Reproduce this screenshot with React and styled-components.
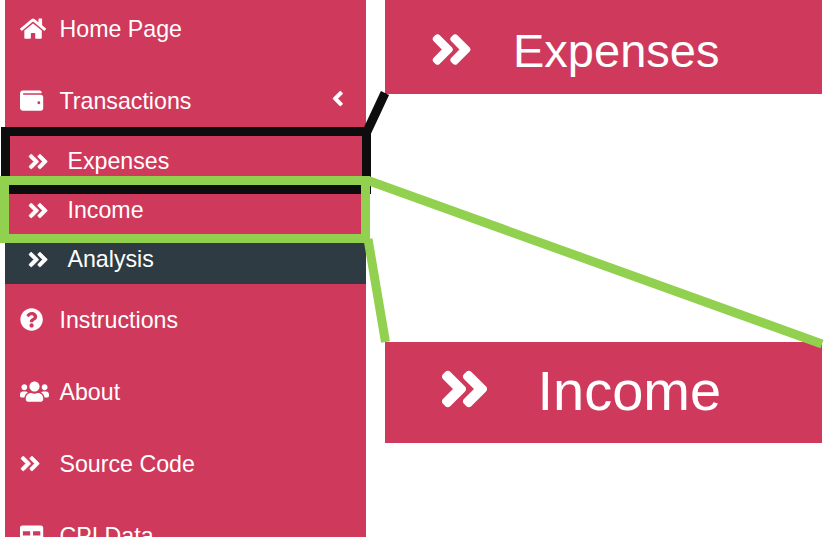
import React from 'react';
import styled, { createGlobalStyle } from 'styled-components';
import {
  FaHome,
  FaWallet,
  FaAngleDoubleRight,
  FaAngleLeft,
  FaQuestionCircle,
  FaUsers,
  FaTable,
} from 'react-icons/fa';

const crimson = '#cf395b';
const slate = '#2e3b43';
const ink = '#0d0d0d';
const lime = '#92d050';

const GlobalStyle = createGlobalStyle`
  * { box-sizing: border-box; }
  body {
    margin: 0;
    background: #fff;
    font-family: "Liberation Sans", Arial, sans-serif;
    overflow: hidden;
  }
`;

const Page = styled.main`
  position: relative;
  display: flex;
  gap: 19px;
  width: 828px;
  height: 537px;
  padding-left: 5px;
  overflow: hidden;
`;

const Sidebar = styled.nav`
  flex: none;
  width: 361px;
  height: 537px;
  overflow: hidden;
  background: ${crimson};
  color: #fff;
  font-size: 23.2px;
`;

const MenuList = styled.div`
  margin-top: -7px;
`;

const MenuItem = styled.a`
  display: flex;
  align-items: center;
  height: 72px;
  padding: 0 22px 0 14.5px;
`;

const SubItem = styled(MenuItem)`
  height: 49px;
  padding-left: 22.5px;
  background: ${(p) => (p.$active ? slate : 'transparent')};
`;

const IconSlot = styled.span`
  display: flex;
  flex: none;
  width: ${(p) => p.$width || 40}px;
  margin-bottom: ${(p) => p.$raise ?? 1}px;

  svg {
    flex: none;
    width: ${(p) => p.$ratio || 1}em;
    height: 1em;
    stroke-width: ${(p) => (p.$bold ? 14 : 0)};
    overflow: visible;
  }
`;

const Toggle = styled(IconSlot)`
  width: auto;
  margin-bottom: 4px;
`;

const Label = styled.span`
  flex: 1;
  padding-top: 1px;
  line-height: 1;
  white-space: nowrap;
`;

const Callouts = styled.section`
  display: flex;
  flex-direction: column;
  justify-content: space-between;
  width: 437px;
  height: 442.5px;
`;

const Callout = styled.div`
  display: flex;
  align-items: center;
  height: ${(p) => p.$height}px;
  padding: ${(p) => p.$drop}px 0 ${(p) => p.$lift}px ${(p) => p.$indent}px;
  background: ${crimson};
  color: #fff;
  font-size: ${(p) => p.$size}px;
`;

const Annotations = styled.svg`
  position: absolute;
  inset: 0;
  pointer-events: none;
`;

function Entry({ as: Row = MenuItem, icon: Icon, ratio = 1, raise, label, trailing, active }) {
  return (
    <Row $active={active}>
      <IconSlot $ratio={ratio} $raise={raise} $bold={Icon === FaAngleDoubleRight}>
        <Icon />
      </IconSlot>
      <Label>{label}</Label>
      {trailing}
    </Row>
  );
}

function SubEntry({ label, active }) {
  return (
    <Entry
      as={SubItem}
      icon={FaAngleDoubleRight}
      ratio={0.875}
      raise={0}
      label={label}
      active={active}
    />
  );
}

export default function App() {
  return (
    <>
      <GlobalStyle />
      <Page>
        <Sidebar>
          <MenuList>
            <Entry icon={FaHome} ratio={1.125} label="Home Page" />
            <Entry
              icon={FaWallet}
              label="Transactions"
              trailing={<Toggle $bold $ratio={0.5}><FaAngleLeft /></Toggle>}
            />
            <SubEntry label="Expenses" />
            <SubEntry label="Income" />
            <SubEntry label="Analysis" active />
            <Entry icon={FaQuestionCircle} label="Instructions" />
            <Entry icon={FaUsers} ratio={1.25} label="About" />
            <Entry icon={FaAngleDoubleRight} ratio={0.875} raise={0} label="Source Code" />
            <Entry icon={FaTable} label="CPI Data" />
          </MenuList>
        </Sidebar>
        <Callouts>
          <Callout $height={94} $size={47} $indent={46} $drop={5} $lift={0}>
            <IconSlot $ratio={0.875} $width={82} $raise={0} $bold><FaAngleDoubleRight /></IconSlot>
            <Label>Expenses</Label>
          </Callout>
          <Callout $height={100.5} $size={56} $indent={55} $drop={0} $lift={4}>
            <IconSlot $ratio={0.875} $width={97.5} $raise={2} $bold><FaAngleDoubleRight /></IconSlot>
            <Label>Income</Label>
          </Callout>
        </Callouts>
        <Annotations width="828" height="537" fill="none" strokeWidth="9">
          <rect x="5.5" y="131.5" width="361" height="58" stroke={ink} />
          <path d="M367 131.5L385 93" stroke={ink} />
          <rect x="4.5" y="180.5" width="361" height="58" stroke={lime} />
          <path d="M368 180.5L822 344M368 239L385.5 342" stroke={lime} />
        </Annotations>
      </Page>
    </>
  );
}
